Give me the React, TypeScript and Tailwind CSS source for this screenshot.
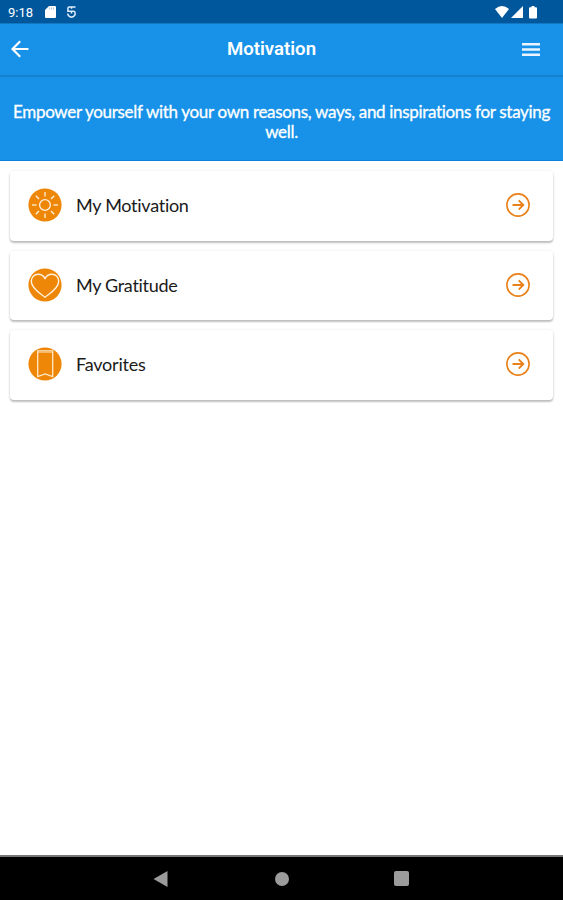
import React from 'react';

const SunIcon = () => (
  <svg className="h-[34px] w-[34px]" viewBox="0 0 34 34" fill="none" stroke="#fff2df" strokeWidth="1.3">
    <circle cx="17" cy="17" r="16.6" fill="#ee8608" stroke="none" />
    <circle cx="17" cy="17" r="5.4" />
    {[0, 45, 90, 135, 180, 225, 270, 315].map((angle) => (
      <path key={angle} d="M17 8.5V4" transform={`rotate(${angle} 17 17)`} />
    ))}
  </svg>
);

const HeartIcon = () => (
  <svg className="h-[34px] w-[34px]" viewBox="0 0 34 34" fill="none" stroke="#fff2df" strokeWidth="1.4" strokeLinejoin="round">
    <circle cx="17" cy="17" r="16.6" fill="#ee8608" stroke="none" />
    <path d="M17 29.3C13.5 26.2 3.3 20.8 3.3 13.2C3.3 9 6.3 6.3 10 6.3C13.2 6.3 15.8 8 17 10.8C18.2 8 20.8 6.3 24 6.3C27.7 6.3 30.7 9 30.7 13.2C30.7 20.8 20.5 26.2 17 29.3Z" />
  </svg>
);

const BookmarkIcon = () => (
  <svg className="h-[34px] w-[34px]" viewBox="0 0 34 34" fill="none" stroke="#ffe8c9" strokeWidth="1.3">
    <circle cx="17" cy="17" r="16.6" fill="#ee8608" stroke="none" />
    <path d="M9.7 3.8H24.7V29.7L17.2 27L9.7 29.7Z" />
    <path d="M9.7 5.4H24.7" strokeOpacity="0.5" />
  </svg>
);

const ArrowCircle = () => (
  <svg className="h-6 w-6" viewBox="0 0 24 24" fill="none" stroke="#e9811a" strokeWidth="1.6">
    <circle cx="12" cy="12" r="11.1" />
    <path d="M6.5 12H17.3M12.7 7.4L17.3 12L12.7 16.6" strokeWidth="1.9" />
  </svg>
);

const items = [
  { label: 'My Motivation', icon: SunIcon, text: 'tracking-[-0.27px]' },
  { label: 'My Gratitude', icon: HeartIcon, text: 'tracking-[-0.3px]' },
  { label: 'Favorites', icon: BookmarkIcon, text: 'tracking-[-0.2px]' },
];

const StatusBar = () => (
  <div className="flex h-[23px] items-center bg-[#00579c] pt-px pl-2 text-white">
    <span className="w-[37px] pt-px font-[Roboto] text-[13px] leading-none">9:18</span>
    <svg className="h-3 w-[11px]" viewBox="0 0 11 12">
      <path d="M4 0H10Q11 0 11 1V11Q11 12 10 12H1Q0 12 0 11V4Z" fill="#fff" />
      <path d="M4.5 1.5V3.5M6.5 1.5V3.5M8.5 1.5V3.5" stroke="#8fb4d6" strokeWidth="0.7" />
    </svg>
    <svg className="ml-[11px] h-3 w-[9px]" viewBox="0 0 9 12" fill="none" stroke="#e3edfa" strokeWidth="1.5">
      <path d="M8.5 1H2.3Q0.9 1 0.9 2.5V5.2H6.8Q8.1 5.2 8.1 7V8.8L6.5 10.5L4.5 11.2L2.5 10.5L0.9 8.8V7.5M4.5 1V2.8M4.5 5V7.5" />
    </svg>
    <svg className="ml-auto h-[13px] w-[14px]" viewBox="0 0 14 13">
      <path d="M0 3Q7-2.8 14 3L7 12Z" fill="#fff" />
    </svg>
    <svg className="ml-[2px] h-[13px] w-[12px]" viewBox="0 0 12 13">
      <path d="M12 0V12H0Z" fill="#fff" />
    </svg>
    <svg className="mr-[26px] ml-[6px] h-[13px] w-2" viewBox="0 0 8 13">
      <path d="M2.5 0H5.5V1.2H7Q8 1.2 8 2.2V11.5Q8 12.5 7 12.5H1Q0 12.5 0 11.5V2.2Q0 1.2 1 1.2H2.5Z" fill="#fff" />
    </svg>
  </div>
);

const App: React.FC = () => {
  return (
    <div className="flex h-[900px] w-[563px] flex-col overflow-hidden bg-white font-[Lato,sans-serif]">
      <StatusBar />

      <header className="flex h-[54px] items-center border-b-2 border-[#1481cf] bg-[#1792e8] pr-[23px] pl-[11px] shadow-[inset_0_1px_0_#1277c2]">
        <svg className="h-[18px] w-[18px]" viewBox="0 0 18 18" fill="none" stroke="#fff" strokeWidth="2.2">
          <path d="M17.5 9H1.8M9.2 1.2L1.5 9L9.2 16.8" />
        </svg>
        <h1 className="flex-1 pl-[198px] font-[Roboto] text-[18.6px] leading-none font-semibold text-white">Motivation</h1>
        <svg className="h-[13px] w-[18px]" viewBox="0 0 18 13" fill="#eaf3ff">
          <path d="M0 0H18V2.5H0ZM0 5.3H18V7.8H0ZM0 10.5H18V13H0Z" />
        </svg>
      </header>

      <section className="h-[84px] border-b border-[#0c80de] bg-[#1792e8] pt-[25px] text-center text-[17px] leading-5 text-white">
        <p className="tracking-[-0.32px] whitespace-nowrap [-webkit-text-stroke:0.3px_white]">
          Empower yourself with your own reasons, ways, and inspirations for staying
          <br />
          well.
        </p>
      </section>

      <main className="flex flex-1 flex-col gap-[10px] px-[10px] pt-[10px]">
        {items.map(({ label, icon: Icon, text }) => (
          <div
            key={label}
            className="flex h-[69.7px] items-center rounded-[4px] bg-white pr-[23px] pb-[2px] pl-[18px] shadow-[0_2px_2px_rgba(0,0,0,0.24),0_0_3px_rgba(0,0,0,0.09)]"
          >
            <Icon />
            <span className={`ml-[14px] flex-1 text-[18px] leading-6 text-[#1a1a1a] ${text}`}>{label}</span>
            <ArrowCircle />
          </div>
        ))}
      </main>

      <nav className="flex h-[45px] items-center border-t-2 border-[#777] bg-black pl-[153px]">
        <svg className="h-4 w-[15px]" viewBox="0 0 15 16">
          <path d="M14.5 0V16L0.5 8Z" fill="#9b9b9b" />
        </svg>
        <div className="ml-[107px] h-[14px] w-[14px] rounded-full bg-[#9b9b9b]" />
        <div className="ml-[105px] h-[15px] w-[15px] rounded-[2px] bg-[#9b9b9b]" />
      </nav>
    </div>
  );
};

export default App;
